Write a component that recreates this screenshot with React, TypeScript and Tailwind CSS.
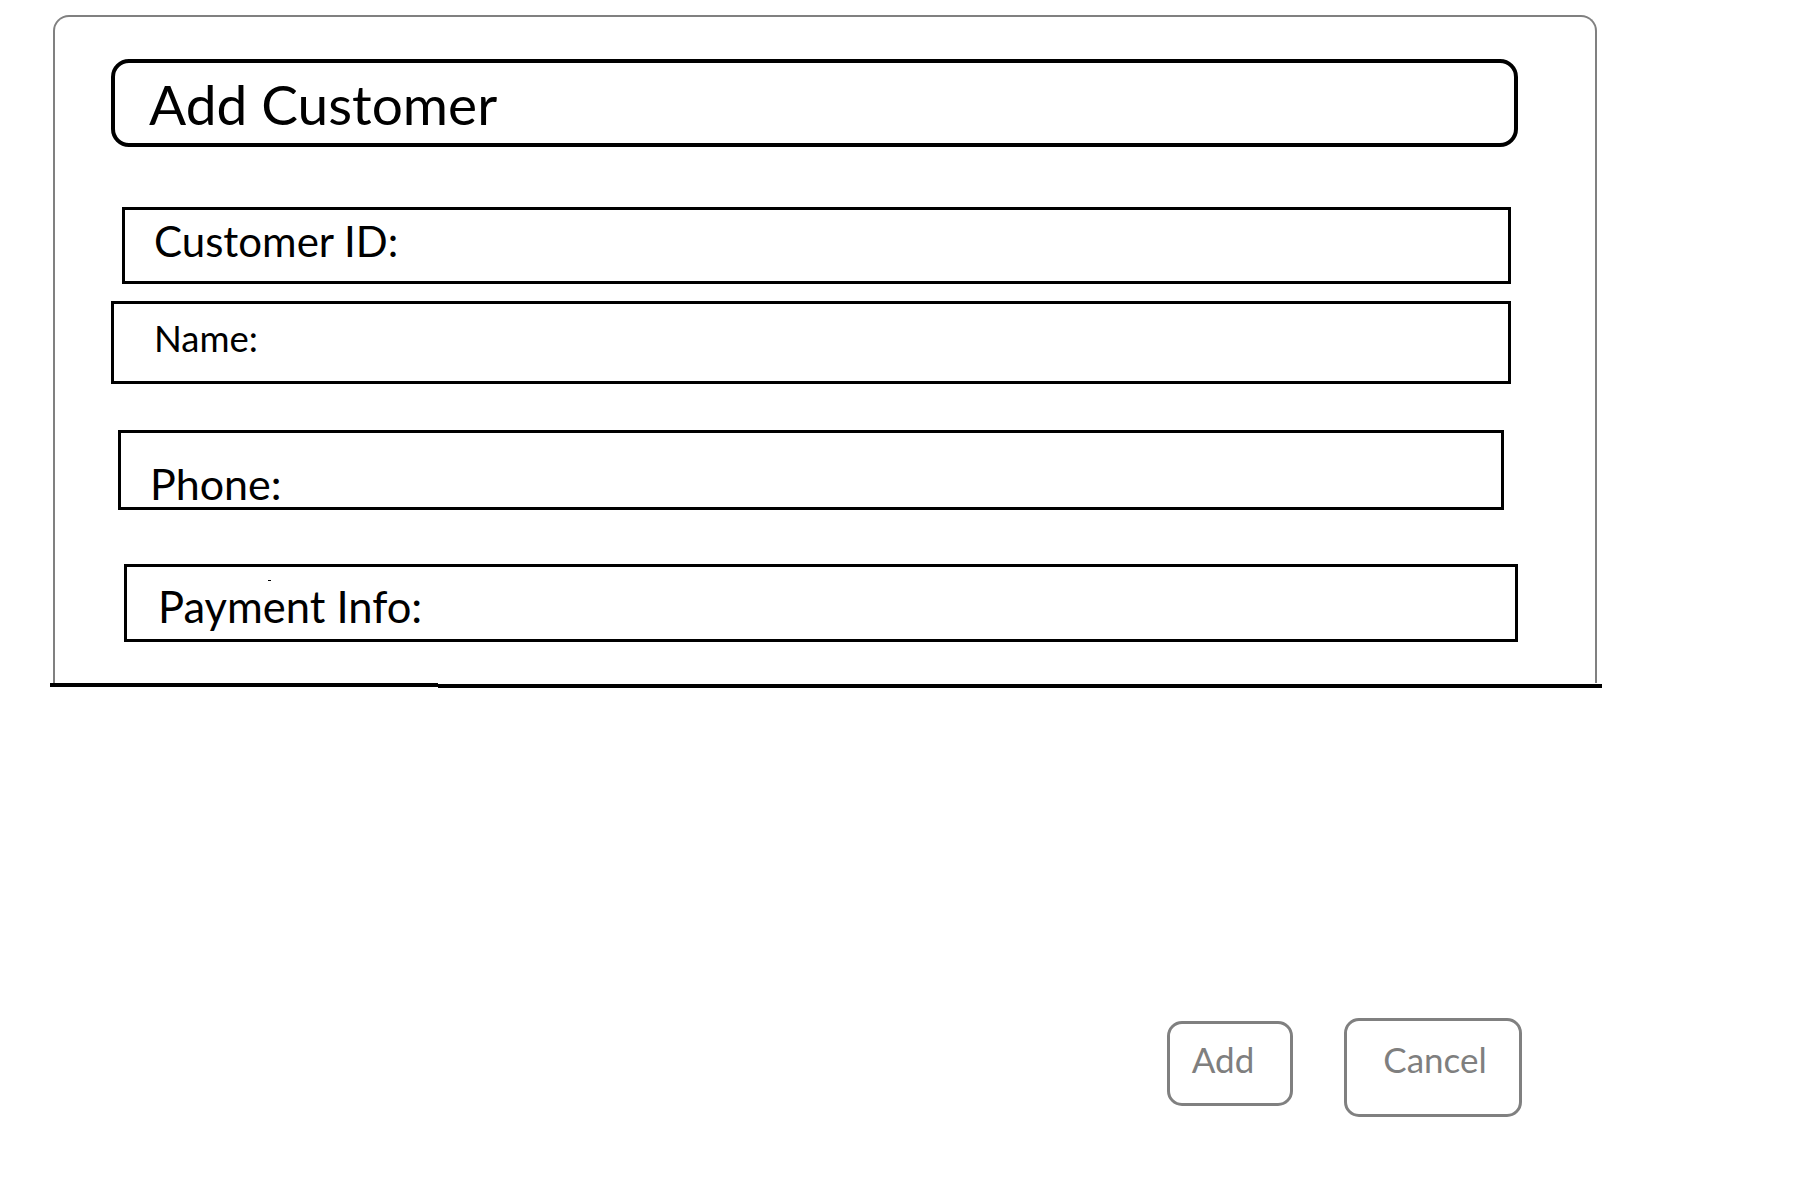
import React from "react";

const font = { fontFamily: "Lato, 'Open Sans', sans-serif" };

export default function App() {
  return (
    <div className="min-h-[1200px] w-[1800px] bg-white text-black" style={font}>
      <div className="flex flex-col pt-[15px]">
        <div className="ml-[53px] flex w-[1544px] flex-col rounded-t-[16px] border-2 border-b-0 border-[#808080] pb-[41px] pt-[42px]">
          <div className="ml-[56px] flex h-[88px] w-[1407px] items-start rounded-[18px] border-4 border-black pl-[34px] pt-[14px]">
            <span className="text-[55px] leading-none">Add Customer</span>
          </div>
          <div className="ml-[67px] mt-[60px] flex h-[77px] w-[1389px] items-start border-[3px] border-black pl-[29px] pt-[10px]">
            <span className="text-[42px] leading-none">Customer ID:</span>
          </div>
          <div className="ml-[56px] mt-[17px] flex h-[83px] w-[1400px] items-start border-[3px] border-black pl-[40px] pt-[16px]">
            <span className="text-[36.5px] leading-none">Name:</span>
          </div>
          <div className="ml-[63px] mt-[46px] flex h-[80px] w-[1386px] items-start border-[3px] border-black pl-[29px] pt-[29px]">
            <span className="text-[43px] leading-none">Phone:</span>
          </div>
          <div className="relative ml-[69px] mt-[54px] flex h-[78px] w-[1394px] items-start border-[3px] border-black pl-[31px] pt-[18px]">
            <span className="text-[43.5px] leading-none">Payment Info:</span>
            <span className="absolute left-[141px] top-[13px] h-[1px] w-[3px] bg-black" />
          </div>
        </div>
        <div className="ml-[50px] flex w-[1552px] items-start">
          <div className="h-[4px] w-[388px] bg-black" />
          <div className="mt-[1px] h-[4px] flex-1 bg-black" />
        </div>
        <div className="ml-[1167px] mt-[330px] flex items-start gap-[51px]">
          <div className="mt-[3px] flex h-[85px] w-[126px] items-start justify-center rounded-[15px] border-[3px] border-[#808080] pr-[14px] pt-[18px]">
            <span className="text-[35px] leading-none text-[#7f7f7f]">Add</span>
          </div>
          <div className="flex h-[99px] w-[178px] items-start justify-center rounded-[15px] border-[3px] border-[#808080] pl-[4px] pt-[21px]">
            <span className="text-[35px] leading-none text-[#7f7f7f]">Cancel</span>
          </div>
        </div>
      </div>
    </div>
  );
}
